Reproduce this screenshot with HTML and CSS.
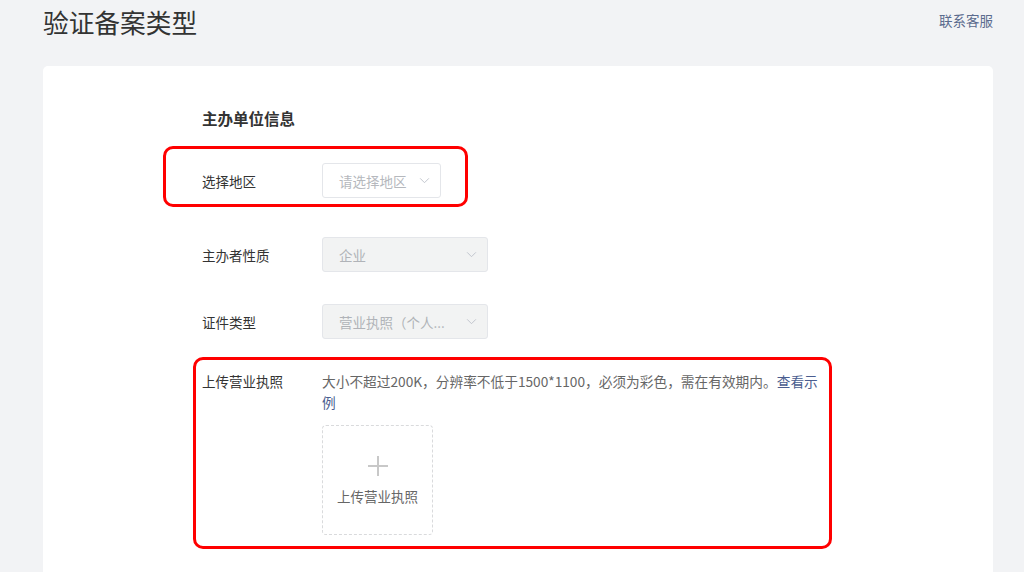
FILE: index.html
```html
<!DOCTYPE html>
<html lang="zh-CN">
<head>
<meta charset="utf-8">
<title>验证备案类型</title>
<link rel="stylesheet" href="styles.css">
</head>
<body>
<header class="top">
  <h1 class="title">验证备案类型</h1>
  <a class="service" href="#">联系客服</a>
</header>
<main class="card">
  <h2 class="section">主办单位信息</h2>
  <div class="row row-region">
    <span class="label">选择地区</span>
    <div class="select select-sm placeholder"><span>请选择地区</span><svg class="chev" viewBox="0 0 12 8" width="11" height="7"><path d="M1 1.5 L6 6.5 L11 1.5" fill="none" stroke="#c0c4cc" stroke-width="1.1"/></svg></div>
  </div>
  <div class="row row-nature">
    <span class="label">主办者性质</span>
    <div class="select disabled"><span>企业</span><svg class="chev" viewBox="0 0 12 8" width="11" height="7"><path d="M1 1.5 L6 6.5 L11 1.5" fill="none" stroke="#c0c4cc" stroke-width="1.1"/></svg></div>
  </div>
  <div class="row row-cert">
    <span class="label">证件类型</span>
    <div class="select disabled"><span>营业执照（个人...</span><svg class="chev" viewBox="0 0 12 8" width="11" height="7"><path d="M1 1.5 L6 6.5 L11 1.5" fill="none" stroke="#c0c4cc" stroke-width="1.1"/></svg></div>
  </div>
  <div class="row row-upload">
    <span class="label">上传营业执照</span>
    <div class="upload-col">
      <p class="hint">大小不超过200K，分辨率不低于1500*1100，必须为彩色，需在有效期内。<a href="#" class="link">查看示例</a></p>
      <div class="uploader">
        <svg class="plus" viewBox="0 0 20 20" width="20" height="20"><path d="M10 0 V20 M0 10 H20" stroke="#c8c8c8" stroke-width="2"/></svg>
        <span class="up-text">上传营业执照</span>
      </div>
    </div>
  </div>
  <div class="mark mark-1"></div>
  <div class="mark mark-2"></div>
</main>
</body>
</html>
```

FILE: styles.css
```css
* { box-sizing: border-box; }
html, body { margin: 0; padding: 0; }
body {
  background: #f2f3f5;
  font-family: "Noto Sans CJK SC", "Noto Sans", "Liberation Sans", sans-serif;
  color: #333;
  width: 1024px;
  height: 572px;
  overflow: hidden;
}
.top {
  display: flex;
  justify-content: space-between;
  align-items: flex-start;
  padding: 0 31px 0 43px;
  height: 66px;
}
.title {
  margin: 4px 0 0;
  font-size: 25.7px;
  font-weight: 400;
  line-height: 36px;
  color: #333;
}
.service {
  margin-top: 10px;
  font-size: 13.5px;
  line-height: 20px;
  color: #5b6b8e;
  text-decoration: none;
}
.card {
  position: relative;
  margin: 0 31px 0 43px;
  background: #fff;
  border-radius: 5px;
  padding: 41px 0 60px 159px;
  min-height: 520px;
}
.section {
  margin: 0;
  font-size: 15.5px;
  font-weight: 700;
  line-height: 22px;
  color: #333;
}
.row {
  display: flex;
  align-items: center;
}
.label {
  width: 120px;
  flex: none;
  font-size: 13.5px;
  color: #333;
  line-height: 20px;
}
.row-region { margin-top: 34px; }
.row-nature { margin-top: 39px; }
.row-cert { margin-top: 32px; }
.select {
  width: 166px;
  height: 35px;
  border: 1px solid #e4e6ea;
  border-radius: 3px;
  display: flex;
  align-items: center;
  justify-content: space-between;
  padding: 0 10px 0 16px;
  font-size: 13.5px;
  color: #b5b8bd;
}
.select-sm { width: 119px; }
.disabled { background: #f2f3f3; color: #b0b3b8; }
.chev { flex: none; }
.row-upload {
  align-items: flex-start;
  margin-top: 31px;
}
.row-upload .label { line-height: 21px; padding-top: 1px; }
.upload-col { width: 506px; }
.hint {
  margin: 0;
  font-size: 13.7px;
  line-height: 21px;
  color: #666;
  padding-top: 1px;
}
.link { color: #4a5d8f; text-decoration: none; }
.uploader {
  margin-top: 12px;
  width: 111px;
  height: 110px;
  border: 1px dashed #d9dadc;
  border-radius: 4px;
  display: flex;
  flex-direction: column;
  align-items: center;
  justify-content: center;
  gap: 11px;
  padding-bottom: 0;
}
.up-text { font-size: 13.5px; color: #666; line-height: 18px; }
.mark {
  position: absolute;
  border: 3px solid #ff0000;
  border-radius: 10px;
  pointer-events: none;
}
.mark-1 { left: 120px; top: 80px; width: 305px; height: 61px; }
.mark-2 { left: 150px; top: 291px; width: 639px; height: 192px; }
```
